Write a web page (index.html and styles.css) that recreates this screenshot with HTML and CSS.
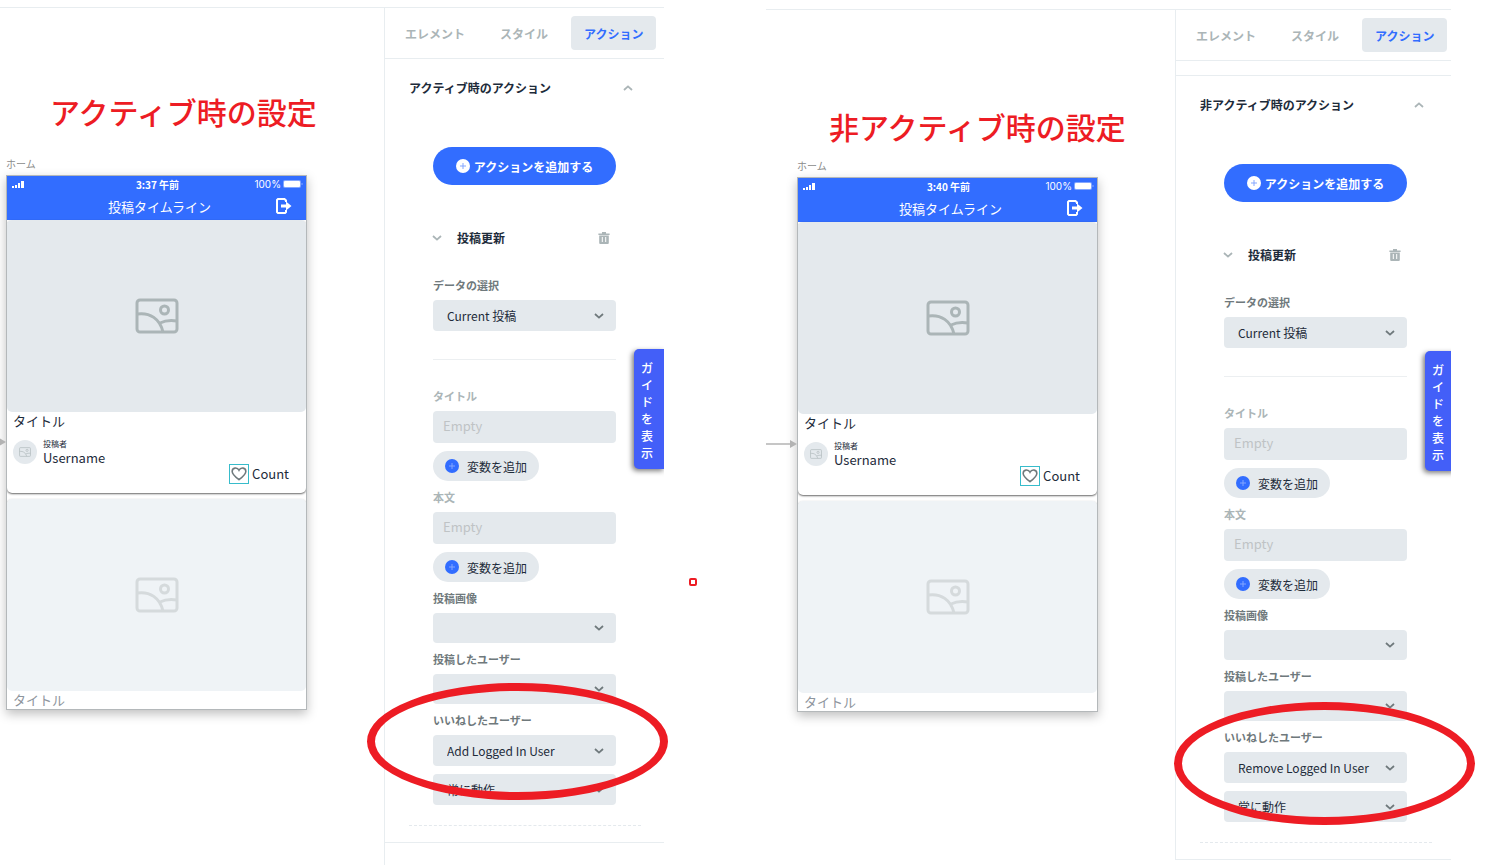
FILE: index.html
```html
<!DOCTYPE html>
<html lang="ja">
<head>
  <meta charset="UTF-8" />
  <meta name="viewport" content="width=device-width, initial-scale=1" />
  <title>いいねアクションの設定</title>
  <link rel="stylesheet" href="styles.css">
</head>
<body>

<!-- アイコン定義 -->
<svg class="defs" aria-hidden="true">
  <symbol id="i-down" viewBox="0 0 10 6"><path d="M1 1l4 3.6L9 1" fill="none" stroke="currentColor" stroke-width="1.8"/></symbol>
  <symbol id="i-up" viewBox="0 0 10 6"><path d="M1 5l4-3.6L9 5" fill="none" stroke="currentColor" stroke-width="1.8"/></symbol>
  <symbol id="i-plus" viewBox="0 0 14 14"><circle cx="7" cy="7" r="7" fill="currentColor"/><path class="cross" d="M7 4v6M4 7h6" fill="none"/></symbol>
  <symbol id="i-trash" viewBox="0 0 12 12"><path d="M4 0h4v1.4h3.6V3H.4V1.4H4zM1.2 3.6h9.6V11a1 1 0 0 1-1 1H2.2a1 1 0 0 1-1-1zM3.8 5v5h1V5zm3.4 0v5h1V5z" fill="currentColor" fill-rule="evenodd"/></symbol>
  <symbol id="i-image" viewBox="0 0 44 36"><g fill="none" stroke="currentColor" stroke-width="3"><rect x="2" y="2" width="40" height="32" rx="3"/><circle cx="29.500" cy="12" r="4"/><path d="M2 16c13-2 23 5 26 18M25 25c5-2.500 11-3 17-2"/></g></symbol>
  <symbol id="i-signal" viewBox="0 0 12 8"><path d="M0 6h2v2H0zM3 5h2v3H3zM6 3h2v5H6zM9 1h3v7H9z" fill="currentColor"/></symbol>
  <symbol id="i-battery" viewBox="0 0 20 8"><rect width="18" height="8" rx="2" fill="#83a6ff"/><rect x="1" y="1" width="16" height="6" rx="1" fill="#fff"/><path d="M19 3v2" stroke="#83a6ff"/></symbol>
  <symbol id="i-logout" viewBox="0 0 16 16"><path d="M10 4V2.500L8.500 1H2L1 2v12l1 1h7l1-1v-2" fill="none" stroke="currentColor" stroke-width="2"/><path d="M5 6.500h5V3.500L15.500 8 10 12.500v-3H5z" fill="currentColor"/></symbol>
  <symbol id="i-heart" viewBox="0 0 18 16"><path d="M9 14.500C4 10.500 1.200 8 1.200 5c0-4.500 5.800-5 7.800-1.300C11 0 16.800.5 16.800 5c0 3-2.800 5.500-7.800 9.500z" fill="none" stroke="currentColor" stroke-width="1.800"/></symbol>
  <symbol id="i-arrow" viewBox="0 0 32 8"><path d="M0 4h26" stroke="#b3b3b3" stroke-width="1.500"/><path d="M25 0l7 4-7 4z" fill="#b3b3b3"/></symbol>
</svg>

<main>
  <!-- アクティブ時 -->
  <section class="shot">
    <div class="editor">
      <div class="canvas">
        <h1>アクティブ時の設定</h1>
        <div class="screen">
          <p class="screen-name">ホーム</p>
          <svg class="link-arrow"><use href="#i-arrow"/></svg>
          <div class="phone">
            <header>
              <div class="status">
                <svg class="signal"><use href="#i-signal"/></svg>
                <b>3:37 午前</b>
                <span class="power">100% <svg class="battery"><use href="#i-battery"/></svg></span>
              </div>
              <div class="nav">
                <span>投稿タイムライン</span>
                <svg class="logout"><use href="#i-logout"/></svg>
              </div>
            </header>
            <article class="post">
              <div class="photo"><svg><use href="#i-image"/></svg></div>
              <h2>タイトル</h2>
              <div class="author">
                <span class="avatar"><svg><use href="#i-image"/></svg></span>
                <p><small>投稿者</small>Username</p>
              </div>
              <div class="likes"><span class="like"><svg><use href="#i-heart"/></svg></span>Count</div>
            </article>
            <article class="post faded">
              <div class="photo"><svg><use href="#i-image"/></svg></div>
              <h2>タイトル</h2>
            </article>
          </div>
        </div>
      </div>

      <aside class="panel">
        <nav class="tabs">
          <button type="button">エレメント</button>
          <button type="button">スタイル</button>
          <button type="button" class="current">アクション</button>
        </nav>
        <div class="group">
          <h3>アクティブ時のアクション <svg class="chev light"><use href="#i-up"/></svg></h3>
          <form class="fields">
            <button type="button" class="add-action"><svg><use href="#i-plus"/></svg>アクションを追加する</button>
            <h4><svg class="chev light"><use href="#i-down"/></svg>投稿更新<svg class="trash"><use href="#i-trash"/></svg></h4>
            <label for="data1">データの選択</label>
            <div class="select"><select id="data1"><option>Current 投稿</option></select><svg class="chev"><use href="#i-down"/></svg></div>
            <hr>
            <label class="light" for="title1">タイトル</label>
            <input type="text" id="title1" placeholder="Empty">
            <button type="button" class="add-var"><svg><use href="#i-plus"/></svg>変数を追加</button>
            <label class="light" for="body1">本文</label>
            <input type="text" id="body1" placeholder="Empty">
            <button type="button" class="add-var"><svg><use href="#i-plus"/></svg>変数を追加</button>
            <label for="image1">投稿画像</label>
            <div class="select empty"><select id="image1"><option></option></select><svg class="chev"><use href="#i-down"/></svg></div>
            <label for="poster1">投稿したユーザー</label>
            <div class="select empty"><select id="poster1"><option></option></select><svg class="chev"><use href="#i-down"/></svg></div>
            <label for="liker1">いいねしたユーザー</label>
            <div class="select"><select id="liker1"><option>Add Logged In User</option></select><svg class="chev"><use href="#i-down"/></svg></div>
            <div class="select when"><select aria-label="動作条件"><option>常に動作</option></select><svg class="chev"><use href="#i-down"/></svg></div>
          </form>
          <div class="dashed"></div>
        </div>
        <button type="button" class="guide">ガイドを表示</button>
      </aside>
    </div>
    <div class="ring"></div>
    <div class="dot"></div>
  </section>

  <!-- 非アクティブ時 -->
  <section class="shot inactive">
    <div class="editor">
      <div class="canvas">
        <h1>非アクティブ時の設定</h1>
        <div class="screen">
          <p class="screen-name">ホーム</p>
          <svg class="link-arrow"><use href="#i-arrow"/></svg>
          <div class="phone">
            <header>
              <div class="status">
                <svg class="signal"><use href="#i-signal"/></svg>
                <b>3:40 午前</b>
                <span class="power">100% <svg class="battery"><use href="#i-battery"/></svg></span>
              </div>
              <div class="nav">
                <span>投稿タイムライン</span>
                <svg class="logout"><use href="#i-logout"/></svg>
              </div>
            </header>
            <article class="post">
              <div class="photo"><svg><use href="#i-image"/></svg></div>
              <h2>タイトル</h2>
              <div class="author">
                <span class="avatar"><svg><use href="#i-image"/></svg></span>
                <p><small>投稿者</small>Username</p>
              </div>
              <div class="likes"><span class="like"><svg><use href="#i-heart"/></svg></span>Count</div>
            </article>
            <article class="post faded">
              <div class="photo"><svg><use href="#i-image"/></svg></div>
              <h2>タイトル</h2>
            </article>
          </div>
        </div>
      </div>

      <aside class="panel">
        <nav class="tabs">
          <button type="button">エレメント</button>
          <button type="button">スタイル</button>
          <button type="button" class="current">アクション</button>
        </nav>
        <div class="group">
          <h3>非アクティブ時のアクション <svg class="chev light"><use href="#i-up"/></svg></h3>
          <form class="fields">
            <button type="button" class="add-action"><svg><use href="#i-plus"/></svg>アクションを追加する</button>
            <h4><svg class="chev light"><use href="#i-down"/></svg>投稿更新<svg class="trash"><use href="#i-trash"/></svg></h4>
            <label for="data2">データの選択</label>
            <div class="select"><select id="data2"><option>Current 投稿</option></select><svg class="chev"><use href="#i-down"/></svg></div>
            <hr>
            <label class="light" for="title2">タイトル</label>
            <input type="text" id="title2" placeholder="Empty">
            <button type="button" class="add-var"><svg><use href="#i-plus"/></svg>変数を追加</button>
            <label class="light" for="body2">本文</label>
            <input type="text" id="body2" placeholder="Empty">
            <button type="button" class="add-var"><svg><use href="#i-plus"/></svg>変数を追加</button>
            <label for="image2">投稿画像</label>
            <div class="select empty"><select id="image2"><option></option></select><svg class="chev"><use href="#i-down"/></svg></div>
            <label for="poster2">投稿したユーザー</label>
            <div class="select empty"><select id="poster2"><option></option></select><svg class="chev"><use href="#i-down"/></svg></div>
            <label for="liker2">いいねしたユーザー</label>
            <div class="select"><select id="liker2"><option>Remove Logged In User</option></select><svg class="chev"><use href="#i-down"/></svg></div>
            <div class="select when"><select aria-label="動作条件"><option>常に動作</option></select><svg class="chev"><use href="#i-down"/></svg></div>
          </form>
          <div class="dashed"></div>
        </div>
        <button type="button" class="guide">ガイドを表示</button>
      </aside>
    </div>
    <div class="ring"></div>
  </section>
</main>

</body>
</html>
```
FILE: styles.css
```css
/* Reset */
* {
  margin: 0; padding: 0; box-sizing: border-box;
}

body {
  background: #fff;
  color: #1d2b3a;
  font-family: "Noto Sans CJK JP", sans-serif;
  font-size: 12px;
}

button, input, select {
  font: inherit;
  color: inherit;
  border: none;
  outline: none;
}

button {
  cursor: pointer;
}

svg {
  display: block;
  flex: none;
}

.defs {
  position: absolute;
  width: 0; height: 0;
}

main {
  display: grid;
  grid-template-columns: 664fr 685fr;
  column-gap: 102px;
  align-items: start;
  padding-right: 59px;
}

.shot {
  position: relative;
  padding-top: 7px;
}

.shot.inactive {
  padding-top: 9px;
}

.editor {
  display: flex;
  overflow: hidden;
  border-top: 1px solid #e8edf0;
}

/* Canvas */
.canvas {
  flex: 1;
  min-width: 0;
  padding: 83px 0 0 6px;
}

.inactive .canvas {
  padding: 96px 0 0 31px;
}

.canvas h1 {
  margin-left: 44px;
  color: #ed1c24;
  font-size: 30px;
  font-weight: 500;
  line-height: 40px;
  white-space: nowrap;
}

.inactive h1 {
  margin-left: 32px;
}

.screen {
  position: relative;
  width: 301px;
  margin-top: 26px;
}

.inactive .screen {
  margin-top: 13px;
}

.screen-name {
  color: #8c8c8c;
  font-size: 10px;
  line-height: 14px;
  padding-bottom: 4px;
}

.link-arrow {
  position: absolute;
  top: 281px; right: 100%;
  width: 32px; height: 8px;
}

.phone {
  border: 1px solid #b4b8ba;
  box-shadow: 0 4px 10px rgba(0,0,0,0.25);
  overflow: hidden;
}

.phone header {
  background: #326dff;
  color: white;
  height: 44px;
}

.status, .nav {
  display: grid;
  grid-template-columns: 1fr auto 1fr;
  align-items: center;
}

.status {
  height: 16px;
  padding: 0 3px 0 5px;
  font-size: 10px;
}

.signal {
  width: 12px; height: 8px;
}

.power {
  display: flex;
  align-items: center;
  justify-content: flex-end;
  gap: 2px;
  font-family: Inter, sans-serif;
  font-size: 10px;
}

.battery {
  width: 20px; height: 8px;
}

.nav {
  height: 28px;
  padding: 0 14px 0 20px;
  font-size: 13px;
}

.nav span {
  grid-column: 2;
}

.logout {
  justify-self: end;
  width: 16px; height: 16px;
}

.post {
  height: 273px;
  background: white;
  border-radius: 5px;
  box-shadow: 0 1px 2px rgba(0,0,0,0.6);
}

.photo {
  display: flex;
  align-items: center;
  justify-content: center;
  height: 192px;
  background: #e4e9ed;
  color: #abb5b7;
  border-radius: 5px;
}

.photo svg {
  width: 44px; height: 36px;
}

.post h2 {
  padding-left: 6px;
  font-size: 13px;
  font-weight: 400;
  line-height: 18px;
}

.author {
  display: flex;
  align-items: center;
  gap: 6px;
  padding: 8px 6px 0;
}

.avatar {
  display: flex;
  align-items: center;
  justify-content: center;
  width: 24px; height: 24px;
  border-radius: 50%;
  background: #e4e9ed;
  color: #b8c0c3;
}

.avatar svg {
  width: 12px; height: 10px;
}

.author p {
  font-size: 13px;
  line-height: 16px;
}

.author small {
  display: block;
  font-size: 8px;
  line-height: 12px;
}

.likes {
  display: flex;
  align-items: center;
  justify-content: flex-end;
  gap: 3px;
  margin-top: -2px;
  padding-right: 17px;
  font-size: 13px;
  line-height: 16px;
}

.like {
  display: flex;
  align-items: center;
  justify-content: center;
  width: 20px; height: 20px;
  border: 1px solid #37bccb;
  color: #6f797c;
}

.like svg {
  width: 16px; height: 14px;
}

.faded {
  height: 210px;
  margin-top: 6px;
  border-radius: 5px 5px 0 0;
}

.faded .photo {
  background: #eff3f6;
  color: #d5dadc;
}

.faded h2 {
  color: #8e959d;
}

/* Panel */
.panel {
  position: relative;
  flex: none;
  width: 280px;
  padding-bottom: 22px;
  border-left: 1px solid #e8edf0;
}

.inactive .panel {
  width: 276px;
  padding-bottom: 0;
}

.tabs {
  display: flex;
  align-items: center;
  gap: 11px;
  height: 51px;
  padding-left: 8px;
  border-bottom: 1px solid #e8edf0;
}

.tabs button {
  height: 34px;
  padding: 0 12px;
  background: none;
  border-radius: 4px;
  color: #abb5b7;
  font-weight: 700;
  white-space: nowrap;
}

.tabs .current {
  padding: 0 13px;
  background: #e4e9ed;
  color: #326dff;
}

.group {
  padding: 19px 0 16px 24px;
  border-bottom: 1px solid #e8edf0;
}

.inactive .group {
  margin-top: 14px;
  border-top: 1px solid #e8edf0;
}

h3, h4 {
  display: flex;
  align-items: center;
  font-size: 12px;
  font-weight: 700;
  line-height: 20px;
}

h3 {
  width: 224px;
  justify-content: space-between;
}

.chev {
  width: 10px; height: 6px;
  color: #6f797c;
}

.chev.light, .trash {
  color: #abb5b7;
}

.fields {
  display: flex;
  flex-direction: column;
  width: 183px;
  margin: 49px 0 0 24px;
}

.add-action {
  display: flex;
  align-items: center;
  justify-content: center;
  gap: 4px;
  height: 38px;
  border-radius: 19px;
  background: #326dff;
  color: white;
  font-weight: 700;
}

.add-action svg, .add-var svg {
  width: 14px; height: 14px;
}

.cross {
  stroke: #83a6ff;
}

.add-action .cross {
  stroke: #326dff;
}

h4 {
  margin: 43px 0 29px;
}

h4 .chev {
  margin: 0 15px 0 -1px;
}

.trash {
  width: 12px; height: 12px;
  margin: 0 6px 0 auto;
}

label {
  margin: 8px 0 7px;
  color: #6f797c;
  font-size: 11px;
  font-weight: 700;
  line-height: 16px;
}

h4 + label, hr + label {
  margin-top: 0;
}

label.light {
  color: #abb5b7;
}

.select {
  display: grid;
  grid-template-columns: 1fr 22px;
  align-items: center;
  height: 31px;
  border-radius: 4px;
  background: #e4e9ed;
}

.select.empty {
  height: 30px;
}

.select.when {
  margin-top: 8px;
}

.select select {
  grid-area: 1 / 1 / 2 / 3;
  height: 100%;
  padding: 0 24px 0 14px;
  appearance: none;
  background: none;
}

.select .chev {
  grid-area: 1 / 2;
  pointer-events: none;
}

hr {
  margin: 28px 0;
  border: none;
  border-top: 1px solid #eceff1;
}

.fields input {
  height: 32px;
  padding: 0 10px 3px;
  border-radius: 4px;
  background: #e4e9ed;
  font-size: 13px;
}

.fields input::placeholder {
  color: #bfc3c5;
}

.add-var {
  display: flex;
  align-items: center;
  align-self: flex-start;
  gap: 8px;
  height: 30px;
  margin-top: 8px;
  padding: 0 12px;
  border-radius: 15px;
  background: #e4e9ed;
}

.add-var svg {
  color: #326dff;
}

.dashed {
  width: 232px;
  margin-top: 20px;
  border-top: 1px dashed #e4e9ed;
}

.guide {
  position: absolute;
  top: 341px; left: 249px;
  width: 31px; height: 120px;
  padding: 2px 12px 0 7px;
  border-radius: 5px 0 0 5px;
  background: #435ff8;
  color: white;
  font-weight: 500;
  line-height: 17px;
  word-break: break-all;
  box-shadow: -2px 2px 5px rgba(0,0,0,0.5);
}

/* 赤い書き込み */
.ring {
  position: absolute;
  top: 683px; right: -4px;
  width: 301px; height: 117px;
  border: 8px solid #ed1c24;
  border-radius: 50%;
  pointer-events: none;
}

.inactive .ring {
  top: 702px; right: -24px;
  height: 123px;
}

.dot {
  position: absolute;
  top: 578px; right: -33px;
  width: 8px; height: 8px;
  border: 2px solid #ed1c24;
  border-radius: 2px;
}
```
